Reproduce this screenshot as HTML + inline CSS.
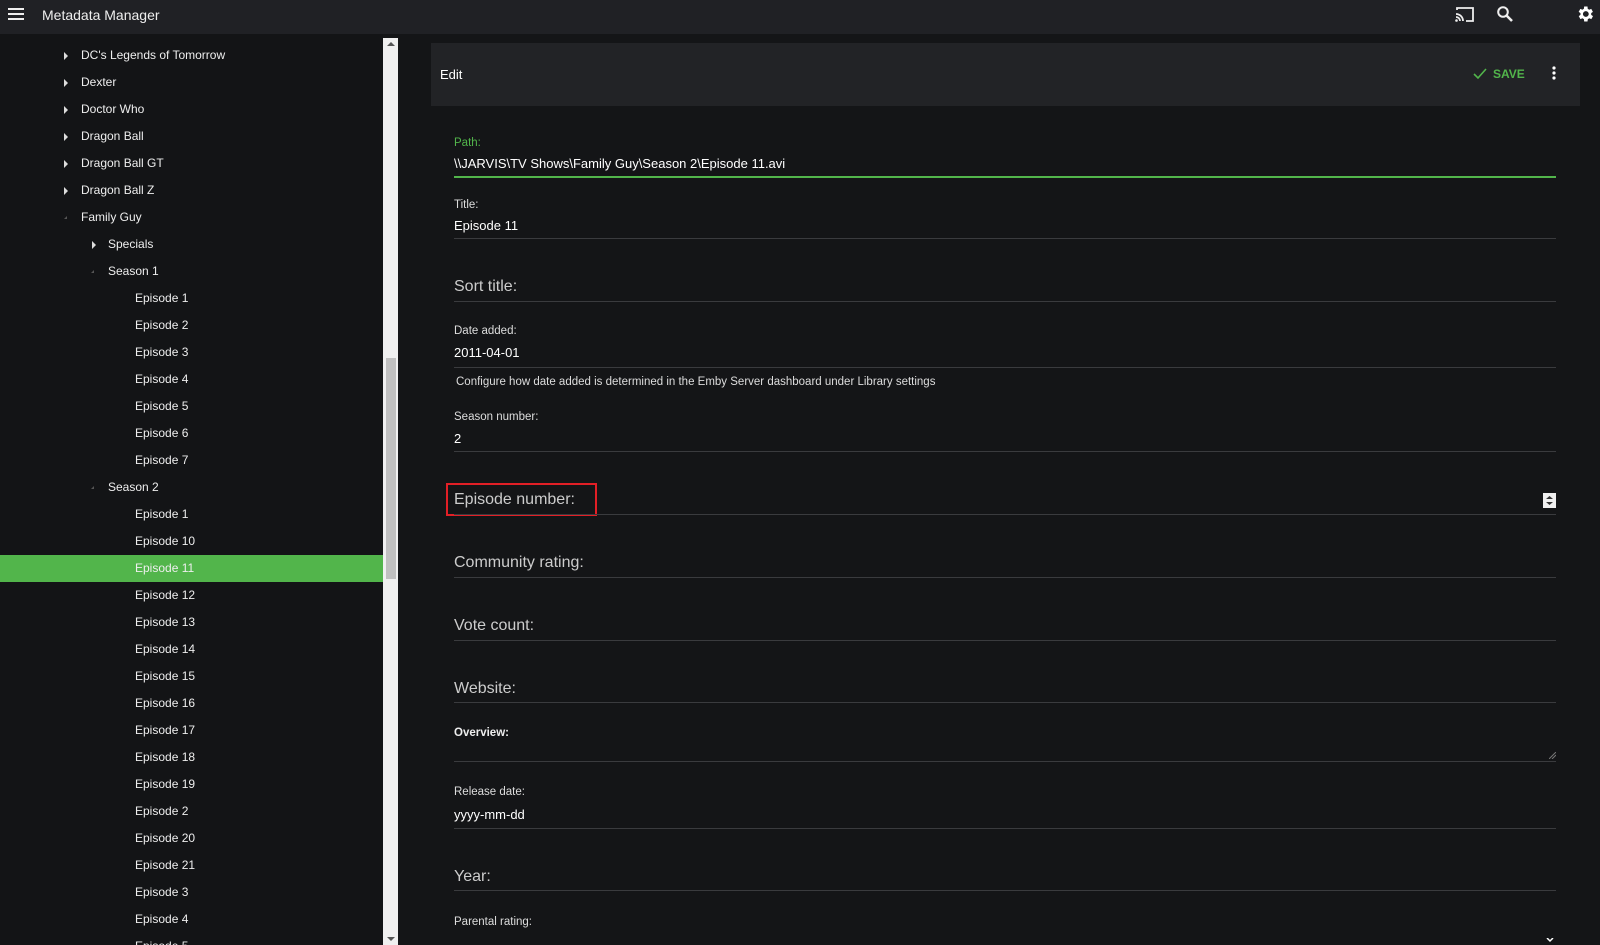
<!DOCTYPE html>
<html><head><meta charset="utf-8"><style>
*{margin:0;padding:0;box-sizing:border-box}
body{width:1600px;height:945px;overflow:hidden;background:#141517;font-family:"Liberation Sans",sans-serif;color:#eee;position:relative}
.top{position:absolute;left:0;top:0;width:1600px;height:34px;background:#202125}
.top .t{position:absolute;left:42px;top:7px;font-size:14px;color:#eee}
.side{position:absolute;left:0;top:34px;width:383px;height:911px;background:#131416;overflow:hidden}
.row{position:absolute;left:0;width:383px;height:27px;font-size:12px;line-height:27px;color:#eee}
.row.sel{background:#52b54b}
.arr{position:absolute;top:10px;width:0;height:0;border-top:4px solid transparent;border-bottom:4px solid transparent;border-left:4px solid #ddd}
.arr.d{border:none;width:3px;height:3px;border-right:3px solid #555;border-top:3px solid transparent;top:12px}
.sb{position:absolute;left:383px;top:38px;width:15px;height:907px;background:#f0f0f0}
.thumb{position:absolute;left:386px;top:358px;width:10px;height:221px;background:#c0c0c0}
.edit{position:absolute;left:431px;top:43px;width:1149px;height:63px;background:#222326}
.lbl{position:absolute;left:454px;font-size:11.5px;color:#ddd}
.val{position:absolute;left:454px;font-size:13px;color:#fff}
.big{position:absolute;left:454px;font-size:16px;color:#ccc}
.ln{position:absolute;left:454px;width:1102px;height:1px;background:#3a3b3e}
</style></head><body>
<div class="top">
<svg style="position:absolute;left:8px;top:7px" width="18" height="14"><rect y="1" width="16" height="2" fill="#eee"/><rect y="6" width="16" height="2" fill="#eee"/><rect y="11" width="16" height="2" fill="#eee"/></svg>
<div class="t">Metadata Manager</div>
<svg style="position:absolute;left:1454px;top:5px" width="22" height="18" viewBox="0 0 22 18"><path d="M3 5V3h16v13h-7" fill="none" stroke="#eee" stroke-width="1.8"/><path d="M2 9a7 7 0 0 1 7 7M2 12a4 4 0 0 1 4 4" fill="none" stroke="#eee" stroke-width="1.8"/><circle cx="2.5" cy="15.5" r="1.3" fill="#eee"/></svg>
<svg style="position:absolute;left:1496px;top:5px" width="18" height="18"><circle cx="7" cy="7" r="4.8" fill="none" stroke="#eee" stroke-width="2"/><path d="M10.5 10.5L16 16" stroke="#eee" stroke-width="2.6"/></svg>
<svg style="position:absolute;left:1575px;top:4px" width="20" height="20" viewBox="0 0 24 24"><path fill="#fff" d="M19.4 13a7.5 7.5 0 0 0 0-2l2.1-1.6-2-3.5-2.5 1a7 7 0 0 0-1.7-1L15 3h-4l-.4 2.9a7 7 0 0 0-1.7 1l-2.5-1-2 3.5L6.6 11a7.5 7.5 0 0 0 0 2l-2.1 1.6 2 3.5 2.5-1a7 7 0 0 0 1.7 1L11 21h4l.4-2.9a7 7 0 0 0 1.7-1l2.5 1 2-3.5zM13 15.5A3.5 3.5 0 1 1 13 8.5a3.5 3.5 0 0 1 0 7z"/></svg>
</div>
<div class="side">
<div class="row" style="top:8px"><span class="arr" style="left:64px"></span><span style="position:absolute;left:81px">DC's Legends of Tomorrow</span></div>
<div class="row" style="top:35px"><span class="arr" style="left:64px"></span><span style="position:absolute;left:81px">Dexter</span></div>
<div class="row" style="top:62px"><span class="arr" style="left:64px"></span><span style="position:absolute;left:81px">Doctor Who</span></div>
<div class="row" style="top:89px"><span class="arr" style="left:64px"></span><span style="position:absolute;left:81px">Dragon Ball</span></div>
<div class="row" style="top:116px"><span class="arr" style="left:64px"></span><span style="position:absolute;left:81px">Dragon Ball GT</span></div>
<div class="row" style="top:143px"><span class="arr" style="left:64px"></span><span style="position:absolute;left:81px">Dragon Ball Z</span></div>
<div class="row" style="top:170px"><span class="arr d" style="left:64px"></span><span style="position:absolute;left:81px">Family Guy</span></div>
<div class="row" style="top:197px"><span class="arr" style="left:92px"></span><span style="position:absolute;left:108px">Specials</span></div>
<div class="row" style="top:224px"><span class="arr d" style="left:91px"></span><span style="position:absolute;left:108px">Season 1</span></div>
<div class="row" style="top:251px"><span style="position:absolute;left:135px">Episode 1</span></div>
<div class="row" style="top:278px"><span style="position:absolute;left:135px">Episode 2</span></div>
<div class="row" style="top:305px"><span style="position:absolute;left:135px">Episode 3</span></div>
<div class="row" style="top:332px"><span style="position:absolute;left:135px">Episode 4</span></div>
<div class="row" style="top:359px"><span style="position:absolute;left:135px">Episode 5</span></div>
<div class="row" style="top:386px"><span style="position:absolute;left:135px">Episode 6</span></div>
<div class="row" style="top:413px"><span style="position:absolute;left:135px">Episode 7</span></div>
<div class="row" style="top:440px"><span class="arr d" style="left:91px"></span><span style="position:absolute;left:108px">Season 2</span></div>
<div class="row" style="top:467px"><span style="position:absolute;left:135px">Episode 1</span></div>
<div class="row" style="top:494px"><span style="position:absolute;left:135px">Episode 10</span></div>
<div class="row sel" style="top:521px"><span style="position:absolute;left:135px">Episode 11</span></div>
<div class="row" style="top:548px"><span style="position:absolute;left:135px">Episode 12</span></div>
<div class="row" style="top:575px"><span style="position:absolute;left:135px">Episode 13</span></div>
<div class="row" style="top:602px"><span style="position:absolute;left:135px">Episode 14</span></div>
<div class="row" style="top:629px"><span style="position:absolute;left:135px">Episode 15</span></div>
<div class="row" style="top:656px"><span style="position:absolute;left:135px">Episode 16</span></div>
<div class="row" style="top:683px"><span style="position:absolute;left:135px">Episode 17</span></div>
<div class="row" style="top:710px"><span style="position:absolute;left:135px">Episode 18</span></div>
<div class="row" style="top:737px"><span style="position:absolute;left:135px">Episode 19</span></div>
<div class="row" style="top:764px"><span style="position:absolute;left:135px">Episode 2</span></div>
<div class="row" style="top:791px"><span style="position:absolute;left:135px">Episode 20</span></div>
<div class="row" style="top:818px"><span style="position:absolute;left:135px">Episode 21</span></div>
<div class="row" style="top:845px"><span style="position:absolute;left:135px">Episode 3</span></div>
<div class="row" style="top:872px"><span style="position:absolute;left:135px">Episode 4</span></div>
<div class="row" style="top:899px"><span style="position:absolute;left:135px">Episode 5</span></div>
</div>
<div class="sb"></div><div class="thumb"></div>
<svg style="position:absolute;left:387px;top:42px" width="8" height="5"><path d="M0 4L4 0L8 4z" fill="#555"/></svg>
<svg style="position:absolute;left:387px;top:937px" width="8" height="5"><path d="M0 0L4 4L8 0z" fill="#555"/></svg>

<div class="edit">
<div style="position:absolute;left:9px;top:24px;font-size:13px;color:#fff">Edit</div>
<svg style="position:absolute;left:1042px;top:25px" width="14" height="12"><path d="M1 6l4 4L13 1" fill="none" stroke="#52b54b" stroke-width="1.6"/></svg>
<div style="position:absolute;left:1062px;top:24px;font-size:12px;color:#52b54b;font-weight:bold">SAVE</div>
<svg style="position:absolute;left:1121px;top:23px" width="4" height="14"><circle cx="2" cy="2" r="1.6" fill="#fff"/><circle cx="2" cy="7" r="1.6" fill="#fff"/><circle cx="2" cy="12" r="1.6" fill="#fff"/></svg>
</div>

<div class="lbl" style="top:137px;color:#52b54b">Path:</div>
<div class="val" style="top:156px">\\JARVIS\TV Shows\Family Guy\Season 2\Episode 11.avi</div>
<div class="ln" style="top:176px;height:2px;background:#52b54b"></div>
<div class="lbl" style="top:199px">Title:</div>
<div class="val" style="top:218px">Episode 11</div>
<div class="ln" style="top:238px"></div>
<div class="big" style="top:278px">Sort title:</div>
<div class="ln" style="top:301px"></div>
<div class="lbl" style="top:325px">Date added:</div>
<div class="val" style="top:345px">2011-04-01</div>
<div class="ln" style="top:367px"></div>
<div class="lbl" style="top:376px;left:456px">Configure how date added is determined in the Emby Server dashboard under Library settings</div>
<div class="lbl" style="top:411px">Season number:</div>
<div class="val" style="top:431px">2</div>
<div class="ln" style="top:451px"></div>
<div class="big" style="top:491px">Episode number:</div>
<div style="position:absolute;left:446px;top:483px;width:151px;height:33px;border:2px solid #e21f26"></div>
<div style="position:absolute;left:1543px;top:493px;width:13px;height:15px;background:#f0f0f0"></div>
<svg style="position:absolute;left:1545px;top:495px" width="9" height="11"><path d="M1 4L4.5 1L8 4zM1 7L4.5 10L8 7z" fill="#333"/></svg>
<div class="ln" style="top:514px"></div>
<div class="big" style="top:554px">Community rating:</div>
<div class="ln" style="top:577px"></div>
<div class="big" style="top:617px">Vote count:</div>
<div class="ln" style="top:640px"></div>
<div class="big" style="top:680px">Website:</div>
<div class="ln" style="top:702px"></div>
<div class="lbl" style="top:727px;font-weight:bold;color:#eee">Overview:</div>
<svg style="position:absolute;left:1549px;top:752px" width="7" height="7"><path d="M0 7L7 0M3 7L7 3" stroke="#777" stroke-width="1"/></svg>
<div class="ln" style="top:761px"></div>
<div class="lbl" style="top:786px">Release date:</div>
<div class="val" style="top:807px">yyyy-mm-dd</div>
<div class="ln" style="top:828px"></div>
<div class="big" style="top:868px">Year:</div>
<div class="ln" style="top:890px"></div>
<div class="lbl" style="top:916px">Parental rating:</div>
<svg style="position:absolute;left:1546px;top:938px" width="8" height="5"><path d="M1 0L4 3L7 0" fill="none" stroke="#fff" stroke-width="1.5"/></svg>
</body></html>
